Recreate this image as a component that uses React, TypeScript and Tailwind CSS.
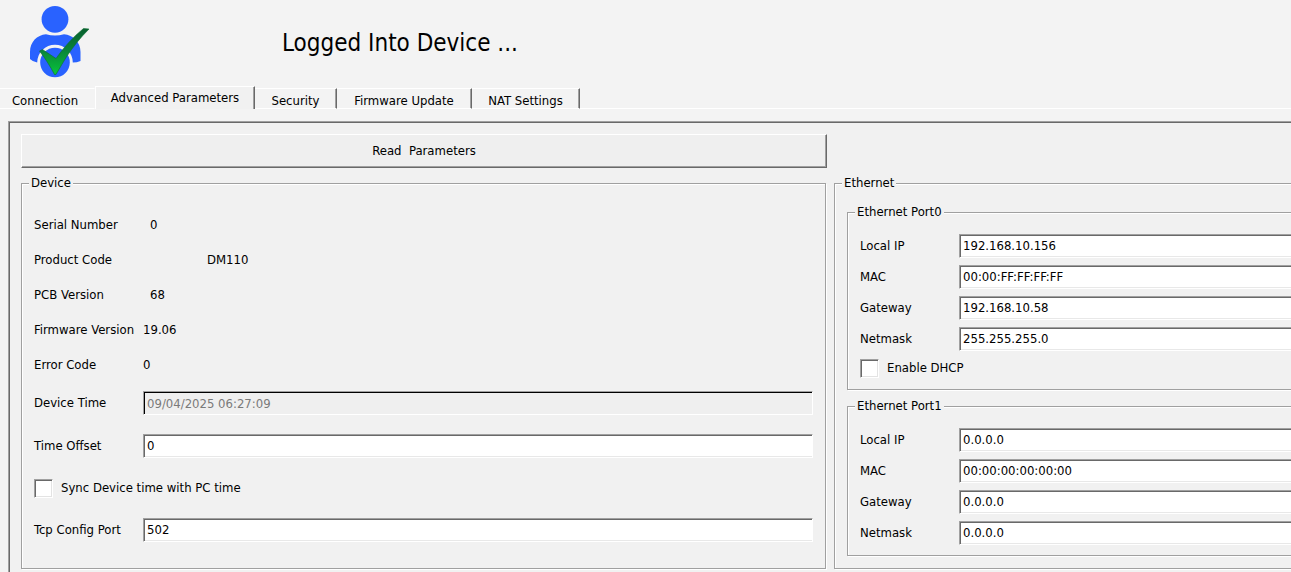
import { useId, useState } from "react";
import type { ReactNode } from "react";

const tabs = [
  { name: "Connection", width: "w-[95px] pr-1" },
  { name: "Advanced Parameters", width: "w-40" },
  { name: "Security", width: "w-[82px]" },
  { name: "Firmware Update", width: "w-[135px]" },
  { name: "NAT Settings", width: "w-[108px]" },
];

const readings = [
  { label: "Serial Number", value: "0", indent: "pl-[7px]" },
  { label: "Product Code", value: "DM110", indent: "pl-16" },
  { label: "PCB Version", value: "68", indent: "pl-[7px]" },
  { label: "Firmware Version", value: "19.06", indent: "pl-0" },
  { label: "Error Code", value: "0", indent: "pl-0" },
];

const sunken =
  "border border-t-[#a0a0a0] border-l-[#a0a0a0] border-b-white border-r-white";

function UserIcon() {
  return (
    <svg viewBox="0 0 62 74" className="mb-0.5 h-[74px] w-[62px]" aria-hidden="true">
      <defs>
        <linearGradient id="tick" x1="0" y1="0" x2="0" y2="1">
          <stop offset="0" stopColor="#08602f" />
          <stop offset="0.45" stopColor="#0a8238" />
          <stop offset="1" stopColor="#08c53a" />
        </linearGradient>
      </defs>
      <g fill="#2962ff">
        <circle cx="27" cy="14.300" r="13.400" />
        <path d="M2 54V47C2 37 9 30 18 29.300C24 31 30 31 36 29.300C45 30 52.500 37 52.500 47V56Q49 57.500 44.800 57.500A17.800 17.800 0 0 0 9.200 57.500Q5 57 2 54Z" />
        <circle cx="27" cy="57.500" r="14.800" />
      </g>
      <path
        d="M11.500 46L14.500 44.500L28 53.500C36 42 45 32 55.500 23.500L61 24C52 33 45 42 39 51C35 57 32 63 28 69.500H26.500C22 61 17 53 11.500 46Z"
        fill="url(#tick)"
        stroke="#0b6b30"
        strokeWidth="0.6"
      />
    </svg>
  );
}

function Group({ title, className = "", children }: { title: string; className?: string; children: ReactNode }) {
  return (
    <fieldset
      className={`min-w-0 border border-[#a0a0a0] shadow-[1px_1px_0_#fff,inset_1px_1px_0_#fff] ${className}`}
    >
      <legend className="ml-[7px] bg-[#f1f1f1] px-0.5 leading-4">{title}</legend>
      {children}
    </fieldset>
  );
}

function Field({
  label,
  value,
  row,
  gap = "w-[109px]",
  open = false,
  disabled = false,
}: {
  label: string;
  value: string;
  row: string;
  gap?: string;
  open?: boolean;
  disabled?: boolean;
}) {
  const id = useId();
  return (
    <div className={`flex items-center ${row}`}>
      <label htmlFor={id} className={`${gap} shrink-0 whitespace-nowrap`}>
        {label}
      </label>
      <input
        id={id}
        type="text"
        defaultValue={value}
        disabled={disabled}
        className={`h-6 min-w-0 flex-1 px-[3px] outline-none ${sunken} ${open ? "border-r-0" : ""} ${
          disabled
            ? "bg-[#efefef] text-[#7a7a7a] shadow-[inset_1px_1px_0_#000]"
            : "bg-white shadow-[inset_1px_1px_0_#696969,inset_0_-1px_0_#e8e8e8]"
        }`}
      />
    </div>
  );
}

function Check({ label, row }: { label: string; row: string }) {
  return (
    <label className={`flex items-center gap-2 ${row}`}>
      <input
        type="checkbox"
        className={`size-[19px] appearance-none bg-white shadow-[inset_1px_1px_0_#696969,inset_-1px_-1px_0_#e3e3e3] checked:bg-[#696969] ${sunken}`}
      />
      <span>{label}</span>
    </label>
  );
}

function Port({ title, values, children }: { title: string; values: string[]; children?: ReactNode }) {
  const labels = ["Local IP", "MAC", "Gateway", "Netmask"];
  return (
    <Group title={title} className="border-r-0">
      <div className="pt-2.5 pb-[7px] pl-3">
        {labels.map((label, i) => (
          <Field key={label} label={label} value={values[i]} row="h-[31px]" gap="w-[99px]" open />
        ))}
        {children}
      </div>
    </Group>
  );
}

export default function App() {
  const [active, setActive] = useState("Advanced Parameters");
  return (
    <div className="flex min-h-screen flex-col overflow-hidden bg-[#f3f3f3] font-['DejaVu_Sans_Condensed','DejaVu_Sans',sans-serif] text-[13px] leading-4 text-black">
      <header className="flex h-[86px] items-center pl-7">
        <UserIcon />
        <h1 className="pl-48 text-[24px] leading-8">Logged Into Device ...</h1>
      </header>

      <nav role="tablist" className="flex items-end">
        {tabs.map(({ name, width }) =>
          name === active ? (
            <button
              key={name}
              role="tab"
              aria-selected="true"
              className={`h-[23px] border-t border-l border-white border-r border-r-[#696969] bg-[#f1f1f1] shadow-[inset_-1px_0_0_#a0a0a0] ${width}`}
            >
              {name}
            </button>
          ) : (
            <button
              key={name}
              role="tab"
              aria-selected="false"
              onClick={() => setActive(name)}
              className={`h-[21px] border-y border-r border-y-white pt-1 ${width} ${
                name === "Connection"
                  ? "border-r-transparent"
                  : "border-r-[#696969] shadow-[inset_-1px_0_0_#a0a0a0]"
              }`}
            >
              {name}
            </button>
          ),
        )}
        <div className="flex-1 border-b border-white" />
      </nav>

      <main className="mt-3 ml-2 flex-1 border-t border-l border-[#a0a0a0] bg-[#f1f1f1] pt-3 pl-3 shadow-[inset_1px_1px_0_#696969]">
        <div className="grid grid-cols-[806fr_457fr] gap-[7px]">
          <button className="h-[34px] border border-t-white border-r-[#696969] border-b-[#696969] border-l-white bg-[#efefef] whitespace-pre shadow-[inset_-1px_-1px_0_#a0a0a0]">
            {"Read  Parameters"}
          </button>
          <div />

          <Group title="Device" className="mr-px">
            <div className="px-3 pt-4">
              <dl>
                {readings.map(({ label, value, indent }) => (
                  <div key={label} className="flex h-[35px] items-center">
                    <dt className="w-[109px] whitespace-nowrap">{label}</dt>
                    <dd className={indent}>{value}</dd>
                  </div>
                ))}
              </dl>
              <Field label="Device Time" value="09/04/2025 06:27:09" row="h-[42px]" disabled />
              <Field label="Time Offset" value="0" row="h-[43px]" />
              <Check label="Sync Device time with PC time" row="h-[42px]" />
              <Field label="Tcp Config Port" value="502" row="h-[41px]" />
            </div>
          </Group>

          <Group title="Ethernet" className="border-r-0">
            <div className="flex flex-col gap-2 pt-[13px] pb-3 pl-3">
              <Port
                title="Ethernet Port0"
                values={["192.168.10.156", "00:00:FF:FF:FF:FF", "192.168.10.58", "255.255.255.0"]}
              >
                <Check label="Enable DHCP" row="h-7" />
              </Port>
              <Port title="Ethernet Port1" values={["0.0.0.0", "00:00:00:00:00:00", "0.0.0.0", "0.0.0.0"]} />
            </div>
          </Group>
        </div>
      </main>
    </div>
  );
}
